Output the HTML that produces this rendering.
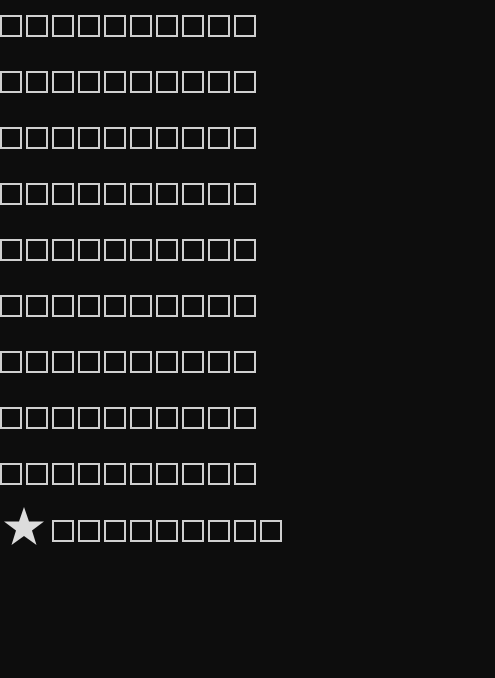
<!DOCTYPE html>
<html><head><meta charset="utf-8"><style>
html,body{margin:0;padding:0;background:#0d0d0d;width:495px;height:678px;overflow:hidden;font-family:"Liberation Sans",sans-serif}
.row{position:absolute;left:0;display:flex;gap:4px}
.row i{display:block;width:18px;height:18px;border:2px solid #cfcfcf}
</style></head><body>
<div class="row" style="top:15px"><i></i><i></i><i></i><i></i><i></i><i></i><i></i><i></i><i></i><i></i></div>
<div class="row" style="top:71px"><i></i><i></i><i></i><i></i><i></i><i></i><i></i><i></i><i></i><i></i></div>
<div class="row" style="top:127px"><i></i><i></i><i></i><i></i><i></i><i></i><i></i><i></i><i></i><i></i></div>
<div class="row" style="top:183px"><i></i><i></i><i></i><i></i><i></i><i></i><i></i><i></i><i></i><i></i></div>
<div class="row" style="top:239px"><i></i><i></i><i></i><i></i><i></i><i></i><i></i><i></i><i></i><i></i></div>
<div class="row" style="top:295px"><i></i><i></i><i></i><i></i><i></i><i></i><i></i><i></i><i></i><i></i></div>
<div class="row" style="top:351px"><i></i><i></i><i></i><i></i><i></i><i></i><i></i><i></i><i></i><i></i></div>
<div class="row" style="top:407px"><i></i><i></i><i></i><i></i><i></i><i></i><i></i><i></i><i></i><i></i></div>
<div class="row" style="top:463px"><i></i><i></i><i></i><i></i><i></i><i></i><i></i><i></i><i></i><i></i></div>
<svg style="position:absolute;left:3px;top:506px" width="42" height="40" viewBox="0 0 42 40">
<polygon points="21,1 26,15.5 41,15.5 29,24.5 33.5,39 21,30 8.5,39 13,24.5 1,15.5 16,15.5" fill="#dcdcdc"/>
</svg>
<div class="row" style="top:520px;left:52px"><i></i><i></i><i></i><i></i><i></i><i></i><i></i><i></i><i></i></div>
</body></html>
